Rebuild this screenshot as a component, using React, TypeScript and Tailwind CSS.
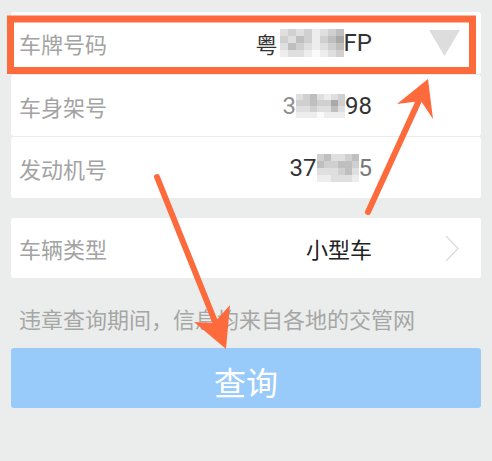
import React from 'react';

const cjk = "font-['Noto_Sans_CJK_SC','Noto_Sans',sans-serif]";
const latin = "font-['Roboto','Noto_Sans_CJK_SC',sans-serif]";

const shades = [
  'bg-[#fafafa]',
  'bg-[#ededed]',
  'bg-[#dfdfdf]',
  'bg-[#d0d0d0]',
  'bg-[#bfbfbf]',
  'bg-[#a9a9a9]',
];

function Mosaic({ cells, cell = 'w-[8px] h-[7px]' }: { cells: number[][]; cell?: string }) {
  return (
    <span className="inline-flex flex-col">
      {cells.map((row, i) => (
        <span key={i} className="flex">
          {row.map((s, j) => (
            <span key={j} className={`${cell} ${shades[s]}`} />
          ))}
        </span>
      ))}
    </span>
  );
}

function Row({
  label,
  children,
  icon,
  className = '',
}: {
  label: string;
  children: React.ReactNode;
  icon?: React.ReactNode;
  className?: string;
}) {
  return (
    <div className={`flex items-center bg-white rounded-[3px] pl-[8px] pr-[21px] ${className}`}>
      <span className={`${cjk} text-[22px] leading-none text-[#a3a3a3]`}>{label}</span>
      <div className="flex-1 flex justify-end items-center">{children}</div>
      <div className="w-[31px] ml-[57px] flex justify-end items-center">{icon}</div>
    </div>
  );
}

export default function App() {
  return (
    <div className="relative w-[492px] h-[461px] bg-[#ebedec] pt-[12px] px-[11px] overflow-hidden">
      <div className="flex flex-col gap-[1px]">
        <Row
          label="车牌号码"
          className="h-[62px]"
          icon={
            <svg width="31" height="26" viewBox="0 0 31 26">
              <polygon points="0,0 31,0 15.5,26" fill="#dddddd" />
            </svg>
          }
        >
          <span className={`${cjk} text-[22px] leading-none text-[#333] mr-[2px]`}>粤</span>
          <Mosaic
            cells={[
              [2, 3, 2, 3, 1, 2, 3, 4],
              [3, 2, 4, 3, 1, 3, 4, 5],
              [2, 4, 3, 2, 1, 2, 3, 4],
              [1, 2, 2, 1, 0, 1, 2, 3],
            ]}
          />
          <span className={`${latin} text-[24px] leading-none text-[#333]`}>FP</span>
        </Row>
        <Row label="车身架号" className="h-[61px]">
          <span className={`${latin} text-[24px] leading-none text-[#8f8f8f]`}>3</span>
          <Mosaic
            cells={[
              [2, 3, 4, 2, 1, 2, 3],
              [3, 3, 4, 3, 3, 5, 3],
              [2, 2, 3, 2, 2, 4, 2],
              [1, 1, 1, 0, 1, 1, 1],
            ]}
            cell="w-[7px] h-[6px]"
          />
          <span className={`${latin} text-[24px] leading-none text-[#333]`}>98</span>
        </Row>
        <Row label="发动机号" className="h-[61px]">
          <span className={`${latin} text-[24px] leading-none text-[#333]`}>37</span>
          <Mosaic
            cells={[
              [3, 4, 2, 2, 3, 4],
              [4, 3, 3, 4, 4, 3],
              [2, 2, 2, 3, 4, 2],
              [1, 1, 2, 2, 2, 1],
            ]}
            cell="w-[7px] h-[7px]"
          />
          <span className={`${latin} text-[24px] leading-none text-[#7a7a7a]`}>5</span>
        </Row>
      </div>

      <Row
        label="车辆类型"
        className="h-[60px] mt-[20px]"
        icon={
          <svg width="16" height="27" viewBox="0 0 16 27">
            <polyline points="2,1 14,13.5 2,26" fill="none" stroke="#dedede" strokeWidth="1.5" />
          </svg>
        }
      >
        <span className={`${cjk} text-[22px] leading-none text-[#222]`}>小型车</span>
      </Row>

      <p className={`${cjk} mt-[25px] pl-[8px] text-[22px] leading-[30px] text-[#a6a6a6]`}>
        违章查询期间，信息均来自各地的交管网
      </p>

      <button className="mt-[15px] w-full h-[60px] rounded-[3px] bg-[#98cafa] flex items-center justify-center pt-[6px]">
        <span className={`${cjk} text-[32px] leading-none text-white`}>查询</span>
      </button>

      {/* annotation overlay */}
      <svg
        className="absolute inset-0 pointer-events-none"
        width="492"
        height="461"
        viewBox="0 0 492 461"
      >
        <rect x="10.5" y="19" width="462" height="51.5" fill="none" stroke="#fd6a3b" strokeWidth="7" />
        <line x1="157" y1="177" x2="220" y2="334" stroke="#fd6a3b" strokeWidth="6" strokeLinecap="round" />
        <polygon points="226,349 194,322 214,323 230,305" fill="#fd6a3b" />
        <line x1="368" y1="212" x2="421" y2="96" stroke="#fd6a3b" strokeWidth="6" strokeLinecap="round" />
        <polygon points="428,79 433,119 421,101 397,104" fill="#fd6a3b" />
      </svg>
    </div>
  );
}
